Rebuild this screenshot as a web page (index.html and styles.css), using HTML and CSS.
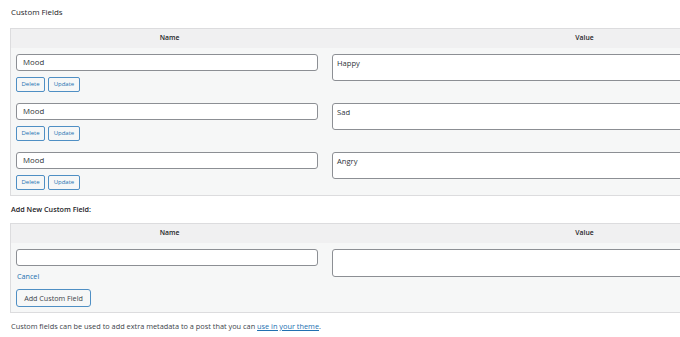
FILE: index.html
```html
<!DOCTYPE html>
<html>
<head>
<meta charset="utf-8">
<link rel="stylesheet" href="styles.css">
</head>
<body>
<div class="page">
  <div class="title">Custom Fields</div>
  <div class="box">
    <div class="head">
      <div class="hname">Name</div>
      <div class="hvalue">Value</div>
    </div>
    <div class="row">
      <div class="ncell">
        <div class="input">Mood</div>
        <div class="btns"><span class="sbtn">Delete</span><span class="sbtn">Update</span></div>
      </div>
      <div class="vcell"><div class="area">Happy</div></div>
    </div>
    <div class="row">
      <div class="ncell">
        <div class="input">Mood</div>
        <div class="btns"><span class="sbtn">Delete</span><span class="sbtn">Update</span></div>
      </div>
      <div class="vcell"><div class="area">Sad</div></div>
    </div>
    <div class="row">
      <div class="ncell">
        <div class="input">Mood</div>
        <div class="btns"><span class="sbtn">Delete</span><span class="sbtn">Update</span></div>
      </div>
      <div class="vcell"><div class="area">Angry</div></div>
    </div>
  </div>
  <div class="subtitle">Add New Custom Field:</div>
  <div class="box">
    <div class="head">
      <div class="hname">Name</div>
      <div class="hvalue">Value</div>
    </div>
    <div class="row newrow">
      <div class="ncell">
        <div class="input"></div>
        <a class="cancel">Cancel</a>
        <span class="bigbtn">Add Custom Field</span>
      </div>
      <div class="vcell"><div class="area tall"></div></div>
    </div>
  </div>
  <p class="note">Custom fields can be used to add extra metadata to a post that you can <a class="link">use in your theme</a>.</p>
</div>
</body>
</html>
```
FILE: styles.css
```css
html, body {
  margin: 0;
  padding: 0;
  background: #ffffff;
  overflow: hidden;
}
body {
  width: 680px;
  height: 337px;
  font-family: "Open Sans", "Noto Sans", sans-serif;
  color: #1d2327;
}
.page {
  padding: 0 0 0 10px;
}
.title {
  font-size: 7.9px;
  line-height: 12px;
  padding: 6px 0 0 1px;
  height: 22px;
  color: #1d2327;
}
.subtitle {
  font-size: 7.2px;
  font-weight: 600;
  line-height: 12px;
  padding: 7px 0 0 1px;
  height: 20px;
  color: #1d2327;
}
.box {
  width: 832px;
  border: 1px solid #dcdcde;
  background: #f6f7f7;
}
.head {
  display: grid;
  grid-template-columns: 317px 1fr;
  height: 19px;
  background: #f0f0f1;
  font-size: 6.8px;
  font-weight: 600;
  line-height: 18px;
  color: #1d2327;
}
.hname, .hvalue {
  text-align: center;
}
.hvalue {
  padding-right: 2px;
}
.row {
  display: grid;
  grid-template-columns: 317px 1fr;
  padding: 6px 0 5px;
}
.ncell {
  padding-left: 5px;
  display: flex;
  flex-direction: column;
  align-items: flex-start;
}
.vcell {
  padding-left: 4px;
}
.input {
  box-sizing: border-box;
  width: 302px;
  height: 17px;
  border: 1px solid #8c8f94;
  border-radius: 3px;
  background: #fff;
  font-size: 7.8px;
  line-height: 15px;
  padding-left: 6px;
  color: #2c3338;
}
.area {
  box-sizing: border-box;
  height: 27px;
  border: 1px solid #8c8f94;
  border-radius: 3px;
  background: #fff;
  font-size: 7.6px;
  line-height: 12px;
  padding: 2px 0 0 4px;
  color: #2c3338;
}
.area.tall {
  height: 28px;
}
.btns {
  display: flex;
  gap: 3px;
  margin-top: 6px;
}
.sbtn {
  box-sizing: border-box;
  height: 15px;
  border: 1px solid #4f8fc4;
  border-radius: 2px;
  background: #f6f7f7;
  color: #2271b1;
  font-size: 6px;
  line-height: 13px;
  padding: 0 4.5px;
}
.cancel {
  display: block;
  margin-top: 4px;
  height: 12px;
  font-size: 7.2px;
  line-height: 12px;
  color: #2271b1;
  padding-left: 1px;
}
.bigbtn {
  box-sizing: border-box;
  margin-top: 7px;
  height: 18px;
  width: 75px;
  border: 1px solid #4f8fc4;
  border-radius: 3px;
  background: #f6f7f7;
  color: #3c434a;
  font-size: 7.2px;
  line-height: 16px;
  text-align: center;
}
.newrow {
  padding-bottom: 5px;
}
.note {
  margin: 0;
  padding: 7px 0 0 1px;
  font-size: 7.35px;
  line-height: 12px;
  color: #3c434a;
}
.link {
  color: #2271b1;
  text-decoration: underline;
}
```
